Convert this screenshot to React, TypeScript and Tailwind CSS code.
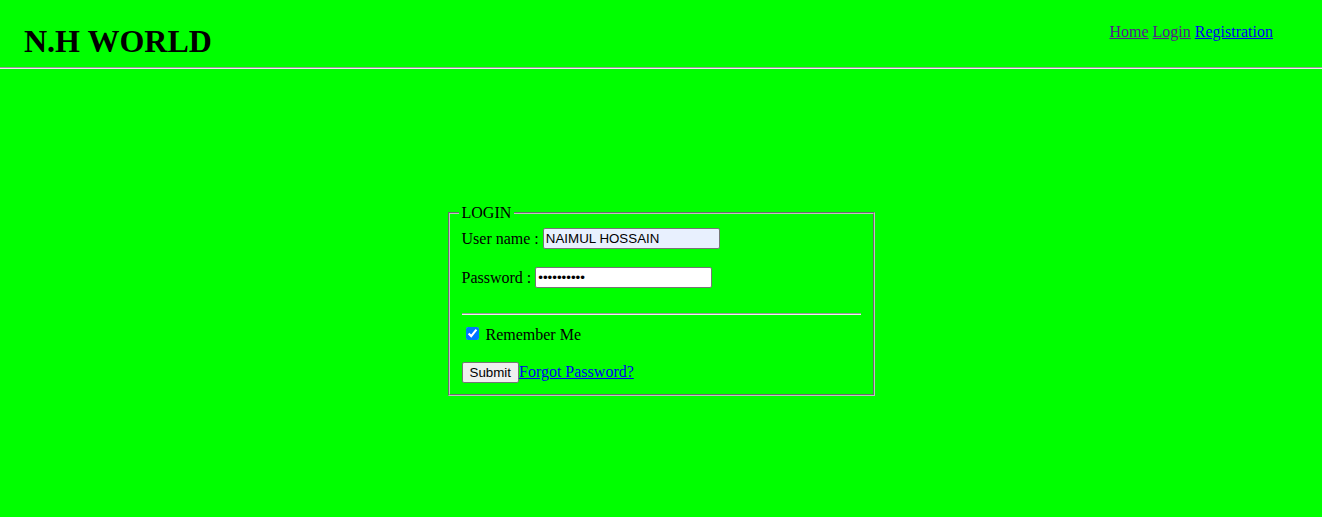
import React from "react";

export default function App() {
  return (
    <div className="min-h-[517px] w-full bg-[#00ff00] text-black font-['Liberation_Serif','Times_New_Roman',serif] text-[16px]">
      <header className="flex items-start justify-between pt-[23px]">
        <h1 className="pl-[24px] text-[32px] font-bold leading-[36px]">N.H WORLD</h1>
        <nav className="pr-[49px] leading-[18px]">
          <a href="#" className="underline text-[#551a8b]">Home</a>{" "}
          <a href="#" className="underline text-[#551a8b]">Login</a>{" "}
          <a href="#" className="underline text-[#0000ee]">Registration</a>
        </nav>
      </header>
      <div className="mt-[8px] h-[2px] border-t border-b border-t-[#9a9a9a] border-b-[#eeeeee]" />

      <div className="flex justify-center pt-[135px]">
        <fieldset className="w-[427px] border-2 [border-style:groove] border-[#c0c0c0] px-[12px] pb-[11px]">
          <legend className="-ml-[3px] px-[3px] leading-[18px]">LOGIN</legend>
          <div className="flex flex-col">
            <div className="mt-[6px] flex h-[21px] items-center">
              <span className="leading-[18px] whitespace-pre">User name : </span>
              <input
                type="text"
                defaultValue="NAIMUL HOSSAIN"
                className="h-[21px] w-[177px] rounded-[2px] border border-[#767676] bg-[#e8f0fe] px-[2px] font-['Liberation_Sans',Arial,sans-serif] text-[13.33px] text-black outline-none"
              />
            </div>
            <div className="mt-[18px] flex h-[21px] items-center">
              <span className="leading-[18px] whitespace-pre">Password : </span>
              <input
                type="password"
                defaultValue="abcdefghij"
                className="h-[21px] w-[177px] rounded-[2px] border border-[#767676] bg-white px-[2px] font-['Liberation_Sans',Arial,sans-serif] text-[13.33px] text-black outline-none"
              />
            </div>
            <div className="mt-[25px] h-[2px] border-t border-b border-t-[#9a9a9a] border-b-[#eeeeee]" />
            <div className="mt-[11px] flex h-[18px] items-start leading-[18px]">
              <input type="checkbox" defaultChecked className="ml-[4px] mr-[3px] mt-[1px] h-[13px] w-[13px]" />
              <span className="whitespace-pre"> Remember Me</span>
            </div>
            <div className="mt-[18px] flex items-start">
              <button className="h-[21px] rounded-[2px] border border-[#767676] bg-[#efefef] px-[7px] font-['Liberation_Sans',Arial,sans-serif] text-[13.33px] leading-[17px] text-black">
                Submit
              </button>
              <a href="#" className="mt-[1px] leading-[18px] underline text-[#0000ee]">Forgot Password?</a>
            </div>
          </div>
        </fieldset>
      </div>
    </div>
  );
}
